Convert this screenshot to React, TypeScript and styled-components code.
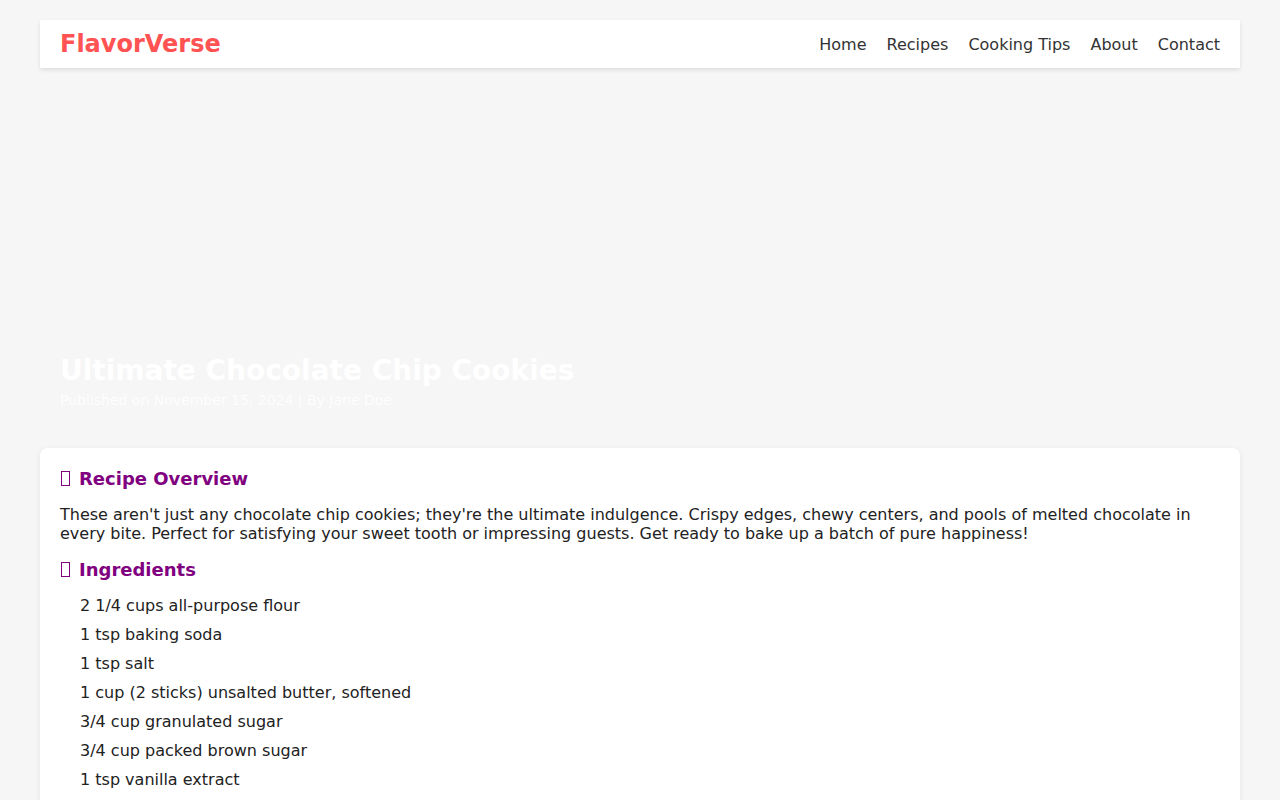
import React from "react";
import styled, { createGlobalStyle } from "styled-components";

const GlobalStyle = createGlobalStyle`
    body {
        margin: 0;
        background-color: #f6f6f6;
        font-family: "DejaVu Sans", sans-serif;
        color: #222;
    }
`;

const Page = styled.div`
    max-width: 1200px;
    margin: 0 auto;
    padding: 20px 0;
`;

const Header = styled.header`
    display: flex;
    align-items: center;
    justify-content: space-between;
    height: 48px;
    padding: 0 20px;
    background-color: #fff;
    box-shadow: 0 2px 4px rgba(0, 0, 0, 0.1);
`;

const Logo = styled.div`
    font-size: 24px;
    font-weight: bold;
    color: #ff5252;
`;

const Nav = styled.nav`
    display: flex;
    gap: 20px;
    a {
        color: #333;
        text-decoration: none;
        font-size: 16px;
    }
`;

const Hero = styled.section`
    height: 340px;
    margin-top: 20px;
    padding: 0 20px 20px;
    box-sizing: border-box;
    display: flex;
    flex-direction: column;
    justify-content: flex-end;
    color: #fff;
    h1 {
        margin: 0 0 5px;
        font-size: 28px;
        font-weight: bold;
    }
    p {
        margin: 0;
        font-size: 14px;
        opacity: 0.9;
    }
`;

const Card = styled.article`
    margin-top: 20px;
    padding: 20px;
    background-color: #fff;
    border-radius: 8px;
    box-shadow: 0 2px 6px rgba(0, 0, 0, 0.08);
`;

const SectionTitle = styled.h2`
    display: flex;
    align-items: center;
    gap: 9px;
    margin: 0 0 16px;
    padding-left: 1px;
    font-size: 18px;
    font-weight: bold;
    color: #800080;
`;

/* the heading emoji shows as an empty glyph box in the design */
const GlyphBox = styled.span`
    display: inline-block;
    width: 7px;
    height: 13px;
    border: 1px solid currentColor;
`;

const Text = styled.p`
    margin: 0 0 16px;
    font-size: 16px;
`;

const List = styled.ul`
    list-style: none;
    margin: 0;
    padding-left: 20px;
    li {
        margin-bottom: 10px;
        font-size: 16px;
    }
`;

const ingredients = [
    "2 1/4 cups all-purpose flour",
    "1 tsp baking soda",
    "1 tsp salt",
    "1 cup (2 sticks) unsalted butter, softened",
    "3/4 cup granulated sugar",
    "3/4 cup packed brown sugar",
    "1 tsp vanilla extract",
    "2 large eggs",
    "2 cups semi-sweet chocolate chips",
];

export default function App() {
    return (
        <>
            <GlobalStyle />
            <Page>
                <Header>
                    <Logo>FlavorVerse</Logo>
                    <Nav>
                        <a href="#">Home</a>
                        <a href="#">Recipes</a>
                        <a href="#">Cooking Tips</a>
                        <a href="#">About</a>
                        <a href="#">Contact</a>
                    </Nav>
                </Header>
                <Hero>
                    <h1>Ultimate Chocolate Chip Cookies</h1>
                    <p>Published on November 15, 2024 | By Jane Doe</p>
                </Hero>
                <Card>
                    <SectionTitle><GlyphBox aria-hidden="true" />Recipe Overview</SectionTitle>
                    <Text>
                        These aren't just any chocolate chip cookies; they're the ultimate indulgence. Crispy edges, chewy centers, and pools of melted chocolate in every bite. Perfect for satisfying your sweet tooth or impressing guests. Get ready to bake up a batch of pure happiness!
                    </Text>
                    <SectionTitle><GlyphBox aria-hidden="true" />Ingredients</SectionTitle>
                    <List>
                        {ingredients.map((item) => (
                            <li key={item}>{item}</li>
                        ))}
                    </List>
                </Card>
            </Page>
        </>
    );
}
